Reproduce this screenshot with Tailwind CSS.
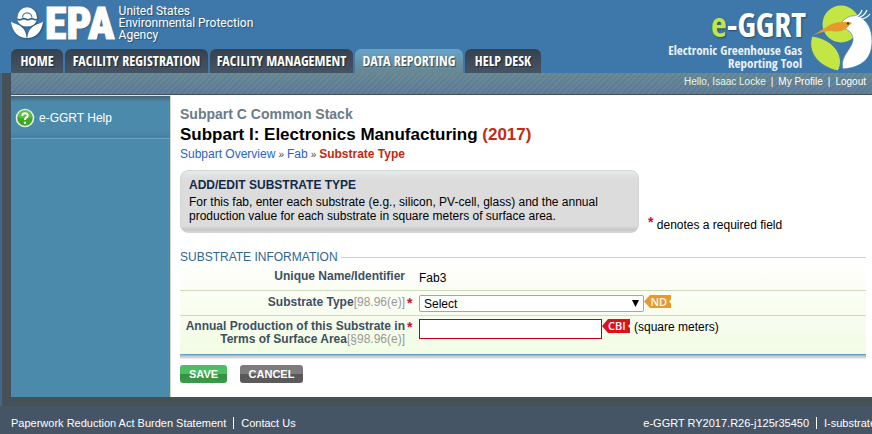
<!DOCTYPE html>
<html lang="en">
<head>
<meta charset="utf-8">
<title>e-GGRT - Substrate Type</title>
<meta name="viewport" content="width=device-width, initial-scale=1">
<script src="https://cdn.jsdelivr.net/npm/@tailwindcss/browser@4"></script>
</head>
<body class="flex min-h-screen flex-col overflow-x-hidden bg-[#465566] font-['Liberation_Sans',Arial,sans-serif] text-xs text-black">
<header class="flex justify-between bg-[#3e78aa] text-white">
  <div class="flex h-[73px] flex-col justify-between pl-[11px]">
    <div class="flex items-start">
      <svg class="mt-[7px] h-8 w-8 shrink-0 drop-shadow-[1px_1px_1px_rgba(0,0,0,0.35)]" viewBox="0 0 32 32" aria-hidden="true">
        <path fill="#fff" d="M6.500 10a9.700 9.700 0 0 1 19.400 0l.3 1.500q-2 1-3.800-.2t-3.500 0t-4 0t-4 0t-4.600.2z"/>
        <path fill="#fff" d="M6.300 13.200q2.400 1 4.500-.2t4 0t4 0t4 0q1.600 1 3 .2Q23.500 19.500 16.200 19.500T6.300 13.200z"/>
        <path fill="#fff" d="M0 14.500c1.500 2 4 1.500 7.500 3.500c5 2.500 7.500 6.500 8.200 13C8 30.500 1.500 26.500 0 14.500z"/>
        <path fill="#fff" d="M32 14.500c-1.500 2-4 1.500-7.500 3.500c-5 2.500-7.500 6.500-8.200 13C24 30.500 30.500 26.500 32 14.500z"/>
        <path fill="none" stroke="#3e78aa" stroke-width="1.200" d="M11.500 10.500a4.700 4.700 0 0 1 9.400 0"/>
      </svg>
      <span class="h-[49px] pl-0.5 font-['Roboto_Condensed',Roboto,sans-serif] text-[44px] leading-[49px] font-black [-webkit-text-stroke:1px_white] text-shadow-[1px_1px_1px_rgba(0,0,0,0.35)]">EPA</span>
      <span class="pt-[5px] pl-1 font-[Roboto,sans-serif] text-xs leading-3 text-shadow-[1px_1px_1px_rgba(0,0,0,0.35)]">United States<br>Environmental Protection<br>Agency</span>
    </div>
    <nav class="flex gap-0.5 text-center font-['Open_Sans_Condensed',Roboto,sans-serif] text-sm leading-6 font-bold whitespace-nowrap text-shadow-[1px_1px_1px_rgba(0,0,0,0.5)]">
      <a href="#" class="w-[52px] rounded-t-md bg-linear-to-b from-[#34414f] to-[#465566]">HOME</a>
      <a href="#" class="w-[143px] rounded-t-md bg-linear-to-b from-[#34414f] to-[#465566]">FACILITY REGISTRATION</a>
      <a href="#" class="w-[143px] rounded-t-md bg-linear-to-b from-[#34414f] to-[#465566]">FACILITY MANAGEMENT</a>
      <a href="#" aria-current="page" class="w-[108px] rounded-t-md bg-linear-to-b from-[#66a3c8] to-[#678691]">DATA REPORTING</a>
      <a href="#" class="w-[76px] rounded-t-md bg-linear-to-b from-[#34414f] to-[#465566]">HELP DESK</a>
    </nav>
  </div>
  <div class="flex gap-1">
    <div class="pt-1 text-right font-['Open_Sans_Condensed',Roboto,sans-serif] text-[13px] leading-[13px] font-bold whitespace-nowrap text-[#eaf1f7]">
      <p class="h-10 text-[34px] leading-10 text-white text-shadow-[1px_1px_2px_rgba(0,0,0,0.4)]"><span class="text-[#c3e645]">e</span>-GGRT</p>
      <p class="pr-1">Electronic Greenhouse Gas</p>
      <p class="pr-1">Reporting Tool</p>
    </div>
    <svg class="h-[72px] w-[62px] shrink-0" viewBox="0 0 62 72" aria-hidden="true">
      <circle cx="31" cy="24" r="18.500" fill="#c3e645"/>
      <path d="M2 36C-3 50 6 66 28 71C36 57 24 39 2 36z" fill="#c3e645" stroke="#3e78aa"/>
      <path d="M31 23C36 17 41 15 47 16C57 19 62 29 62 41C62 58 53 67 33 69C29 56 44 48 43 38C42 33 39 30 35 29z" fill="#fff" stroke="#3e78aa" stroke-width=".6"/>
      <path d="M45 17Q50 16 52 10M47 18Q54 17 57 10M50 19Q56 19 60 14" fill="none" stroke="#fff" stroke-width="1.200"/>
      <path d="M2 36L18 26Q24 22 33 22Q38 21 42 23Q39 25 37 28Q30 33 22 31Q12 31 2 36z" fill="#e59a2c"/>
      <circle cx="38" cy="23.500" r="1.200" fill="#4b3414"/>
    </svg>
  </div>
</header>
<div class="border-l-2 border-[#41678c]">
  <div class="bg-[#455157] pb-[9px] pl-[9px]">
    <div class="flex h-[22px] justify-end border-b border-[#455157] bg-[#5f8199] bg-[repeating-linear-gradient(135deg,#ffffff08_0_2px,#00000008_2px_4px),linear-gradient(#678893,#5c7b9c)] pr-1.5 text-[10px] leading-[18px] text-white">
      <span class="text-[#e0fbe4]">Hello, Isaac Locke</span><span class="px-[5px]">|</span><a href="#">My Profile</a><span class="px-[5px]">|</span><a href="#">Logout</a>
    </div>
    <div class="flex min-h-[302px] bg-white">
      <aside class="w-[160px] shrink-0 border-t border-r border-t-[#e3eda6] border-r-[#cfdac4] bg-[#4b8aaa]">
        <a href="#" class="flex h-[43px] items-center gap-1 border-b border-[#6ba5d0] bg-[linear-gradient(#466373,#4b8aaa_6px,#4b8aaa_36px,#447e9c)] pt-0.5 pl-1 text-white">
          <svg class="size-5" viewBox="0 0 20 20" aria-hidden="true"><circle cx="10" cy="10" r="8.500" fill="#3fa629" stroke="#e4efe0" stroke-width="1.600"/><path d="M3 9a7 7 0 0 1 14 0q-7 3-14 0z" fill="#7ccd5d" opacity=".6"/><path d="M7.200 7.800q.3-2.500 2.800-2.500t2.700 2.200q0 1.300-1.500 2.200Q10 10.500 10 12" fill="none" stroke="#fff" stroke-width="2"/><circle cx="10" cy="14.700" r="1.200" fill="#fff"/></svg>
          <span>e-GGRT Help</span>
        </a>
      </aside>
      <main class="min-w-0 grow pt-[11px] pr-1.5 pl-[9px]">
        <p class="text-[14px] leading-4 font-bold text-[#6b7b88]">Subpart C Common Stack</p>
        <h1 class="pt-0.5 text-[17px] leading-[22px] font-bold">Subpart I: Electronics Manufacturing <span class="text-[#c22b13]">(2017)</span></h1>
        <nav class="flex items-baseline gap-[3px] leading-4 text-[#2a63c6]"><a href="#">Subpart Overview</a><span class="text-[10px] text-[#444]">»</span><a href="#">Fab</a><span class="text-[10px] text-[#444]">»</span><b class="text-[#c22b13]">Substrate Type</b></nav>
        <div class="flex items-end gap-[9px] pt-[7px]">
          <section class="h-[63px] w-[459px] rounded-lg border border-[#d4d6d6] bg-[linear-gradient(#e4eceb,#dcdcdc_8px,#dcdcdc_55px,#c6c6c6_59px,#d5d5d5)] px-2 pt-1.5">
            <h2 class="leading-4 font-bold text-[#12294a]">ADD/EDIT SUBSTRATE TYPE</h2>
            <p class="pt-0.5 leading-[14px]">For this fab, enter each substrate (e.g., silicon, PV-cell, glass) and the annual production value for each substrate in square meters of surface area.</p>
          </section>
          <p class="leading-4 whitespace-nowrap"><span class="align-[2px] text-sm leading-3 font-bold text-[#c8102e]">*</span> denotes a required field</p>
        </div>
        <form class="pt-4">
          <h2 class="flex items-center gap-[3px] leading-4 text-[#2f6690] after:h-px after:grow after:bg-[#bcd8e4]">SUBSTRATE INFORMATION</h2>
          <div class="bg-linear-to-b from-[#fffefd] to-[#f2fce4] text-[#3d5060]">
            <div class="flex h-[26px] border-b border-[#cbdcb8]">
              <span class="w-[225px] pt-[3px] text-right font-bold">Unique Name/Identifier</span><span class="pt-[5px] pl-3.5 text-black">Fab3</span>
            </div>
            <div class="flex h-[25px] items-start border-b border-[#cbdcb8] pt-1">
              <label for="type" class="w-[225px] pt-px text-right leading-[13px] font-bold">Substrate Type<span class="font-normal text-[#999]">[98.96(e)]</span></label><span class="w-3.5 pl-0.5 text-sm leading-4 font-bold text-[#c8102e]">*</span>
              <span class="relative"><select id="type" class="block h-[17px] w-[225px] appearance-none rounded-[2px] border border-[#a5a5a5] bg-white pl-1 text-xs leading-[14px] text-black"><option>Select</option></select><svg class="pointer-events-none absolute top-[5px] right-[5px] h-[7px] w-[7px]" viewBox="0 0 7 7" aria-hidden="true"><path d="M0 0h7L3.500 7z"/></svg></span>
              <svg class="h-[13px] w-[27px]" viewBox="0 0 27 13" role="img" aria-label="ND"><path d="M0 6.500L6 0h21v4.500l-2 2l2 2V13H6z" fill="#e8992e"/><text x="6.500" y="10.500" fill="#fff" font-family="Open Sans" font-size="11" font-weight="600">ND</text></svg>
            </div>
            <div class="flex h-[38px] items-start pt-[3px]">
              <label for="prod" class="w-[225px] pt-px text-right leading-[13px] font-bold">Annual Production of this Substrate in<br>Terms of Surface Area<span class="font-normal text-[#999]">[§98.96(e)]</span></label><span class="w-3.5 pl-0.5 text-sm leading-4 font-bold text-[#c8102e]">*</span>
              <input id="prod" type="text" class="h-5 w-[183px] border border-[#b80016] bg-white px-1 text-black">
              <svg class="h-[14px] w-[28px]" viewBox="0 0 28 14" role="img" aria-label="CBI"><path d="M0 7L6 0h22v5l-2 2l2 2v5H6z" fill="#da1220"/><text x="6" y="11" fill="#fff" font-family="Open Sans" font-size="11" font-weight="600">CBI</text></svg>
              <span class="pl-1 leading-4 text-black">(square meters)</span>
            </div>
          </div>
          <div class="h-[5px] border-t border-[#5fa0c8] bg-linear-to-b from-[#b0b0b0] to-[#f2f2f2]"></div>
          <div class="flex gap-[13px] pt-[6px] text-[11px] leading-4 font-bold text-white">
            <button type="submit" class="h-[18px] w-[47px] rounded-[3px] bg-[linear-gradient(#4ebd63_50%,#33913f_50%,#3a9b48)]">SAVE</button>
            <button type="button" class="h-[18px] w-[63px] rounded-[3px] bg-[linear-gradient(#7c7c7c_50%,#575757_50%,#5c5c5c)]">CANCEL</button>
          </div>
        </form>
      </main>
    </div>
  </div>
</div>
<footer class="flex justify-between pt-[9px] pl-[11px] text-[11px] leading-4 whitespace-nowrap text-white">
  <div class="flex items-center gap-[7px]"><a href="#">Paperwork Reduction Act Burden Statement</a><span class="h-3 w-px bg-white"></span><a href="#">Contact Us</a></div>
  <div class="-mr-1 flex items-center gap-[7px]"><span>e-GGRT RY2017.R26-j125r35450</span><span class="h-3 w-px bg-white"></span><span>I-substrate</span></div>
</footer>
</body>
</html>
